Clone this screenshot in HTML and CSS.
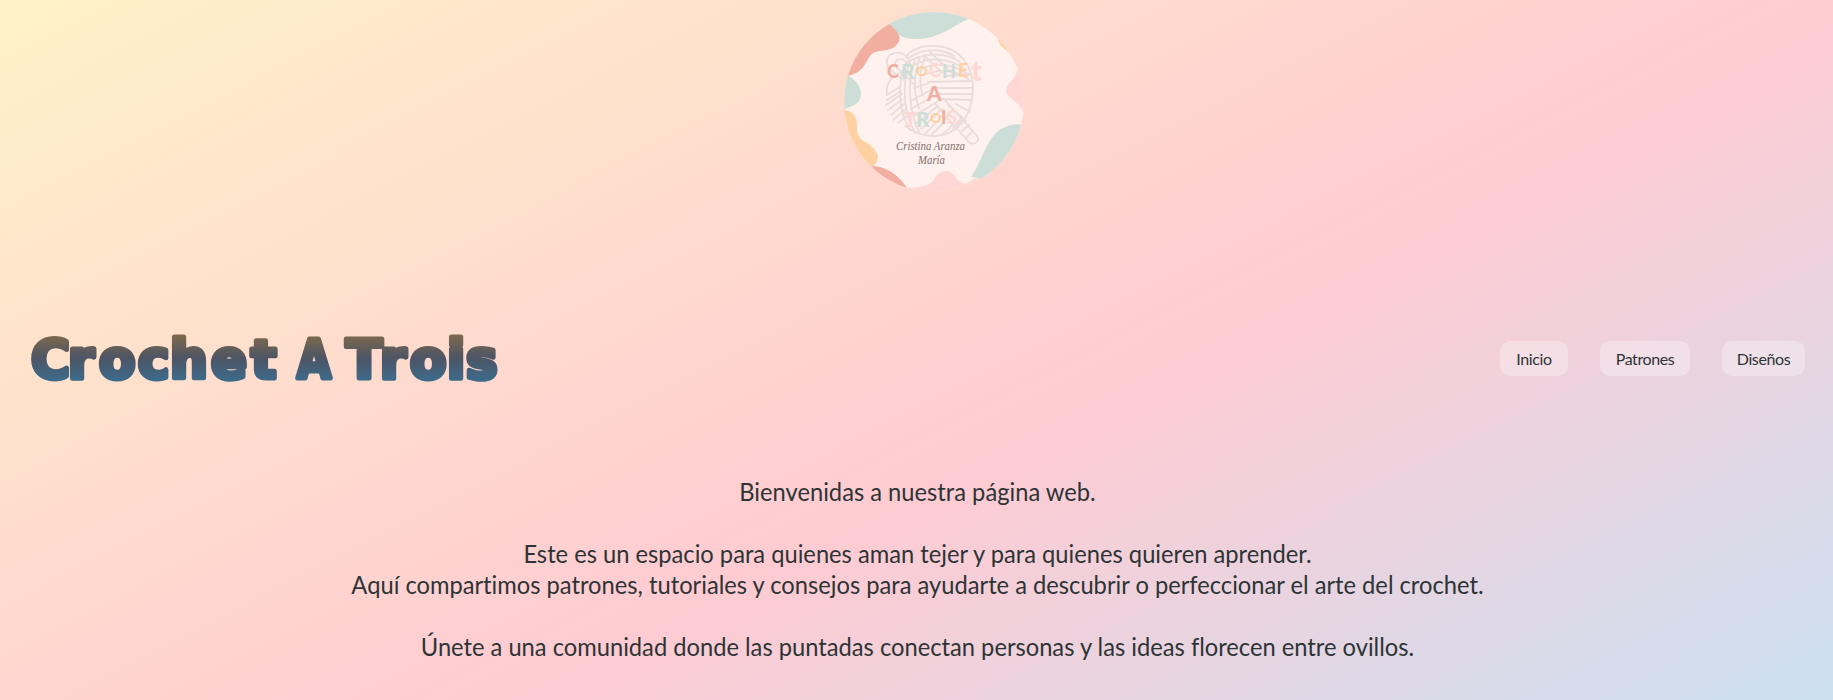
FILE: index.html
```html
<!DOCTYPE html>
<html lang="es">
<head>
<meta charset="utf-8">
<title>Crochet A Trois</title>
<link rel="stylesheet" href="styles.css">
</head>
<body>
<div class="brand">
<svg class="logo" viewBox="0 0 180 180" role="img">
<defs><clipPath id="disc"><circle cx="90" cy="90" r="90"/></clipPath></defs>
<g clip-path="url(#disc)">
<rect width="180" height="180" fill="#fff1ed"/>
<path d="M45 12C50 20 56 27 73 27C95 27 110 13 126 6L110-5H50Z" fill="#ccded7"/>
<path d="M45 12C54 19 58 25 54 31C49 40 38 37 29 41C21 47 23 60 3 64L-5 50L20 10Z" fill="#f2aea1"/>
<path d="M4 64C10 66 18 75 17 83C15 94 7 94-2 98V63Z" fill="#ccded7"/>
<path d="M-2 98C8 98 13 103 13 115C13 131 22 127 29 136C38 145 33 151 28 155L0 145Z" fill="#fed0a2"/>
<path d="M28 154C43 154 57 165 64 178L40 185Z" fill="#f2aea1"/>
<path d="M63 176C75 175 88 175 92 164C98 157 107 157 112 166C117 172 121 173 127 169C132 163 139 167 144 170L125 185H65Z" fill="#ffd8d5"/>
<path d="M127 165C138 150 142 127 157 117C166 112 176 111 182 114V160L142 175Q135 163 127 165Z" fill="#ccded7"/>
<path d="M173 57C173 67 163 69 162 78C163 89 175 87 179 101L190 90V50Z" fill="#ffd8d5"/>
<path d="M132 8C137 15 143 17 149 20L155 12ZM154 27C155 34 160 36 167 42L165 25Z" fill="#fed0a2"/>
<g fill="none" stroke="#e9dddb" stroke-width="1.8" stroke-linecap="round" stroke-linejoin="round">
<path d="M62 45C68 36 80 33 92 34C115 35 130 54 129 78C128 105 113 124 89 124C78 124 68 119 61 114"/>
<path d="M65 46C78 36 97 36 110 44M62 51C79 40 103 40 116 50M68 54C84 44 106 46 121 57M72 59C88 50 110 51 125 63M78 64C93 56 112 57 127 69M84 70L128 69M88 76L129 76M92 82L129 82M95 87L128 88M102 64L127 62"/>
<path d="M62 50C52 72 55 101 66 118M66 49C57 73 60 102 71 121M71 47C62 73 66 103 76 122M76 45C69 65 70 83 75 96M82 43C75 58 75 72 79 84M80 43L98 61M86 40L107 60"/>
<path d="M57 61C47 63 41 74 43 83L57 74M43 88L57 79M42 93L58 82M44 98L59 87M47 103L60 92M49 108L61 98M54 111L62 105M70 76L85 71M67 89L92 75M67 97L95 81M70 104L99 86M73 111L94 94M77 117L98 97M81 122L101 101M88 122C94 117 101 109 104 103M98 122Q107 117 110 109M109 116L116 107M104 93L122 109M112 92L126 100"/>
<path d="M63 54C64 48 56 45 52 49C47 55 58 59 63 65L71 74M59 68C50 60 41 56 43 49C44 40 55 39 61 43Q66 48 68 57"/>
<path d="M91 92L124 129C128 135 137 130 133 124L101 88M113 113L119 107M118 119L125 113M123 125L129 119"/>
</g>
<g class="art">
<text y="66"><tspan x="43" fill="#f2aea1">C</tspan><tspan x="57" y="67" class="big" fill="#ccded7">R</tspan><tspan x="72" y="64" class="small" fill="#fed0a2">O</tspan><tspan x="85" y="65" fill="#ffd8d5">C</tspan><tspan x="98" y="66" fill="#ccded7">H</tspan><tspan x="114" y="65" fill="#fed0a2">E</tspan><tspan x="127" y="69" class="tall" fill="#ffd8d5">t</tspan></text>
<text x="83" y="89" class="big" fill="#f2aea1">A</text>
<text y="115"><tspan x="60" y="115" class="big" fill="#ffd8d5">T</tspan><tspan x="72" y="115" class="big" fill="#ccded7">R</tspan><tspan x="86" y="111" class="small" fill="#fed0a2">O</tspan><tspan x="97" y="112" fill="#f2aea1">I</tspan><tspan x="103" y="112" fill="#ffd8d5">S</tspan></text>
</g>
<g class="script"><text x="52" y="138" textLength="69" lengthAdjust="spacingAndGlyphs">Cristina Aranza</text><text x="74" y="152" textLength="27" lengthAdjust="spacingAndGlyphs">María</text></g>
</g>
</svg>
</div>
<header class="header">
<h1 class="title"><svg class="wordmark" viewBox="0 0 490 75">
<defs><linearGradient id="ink" gradientUnits="userSpaceOnUse" x1="0" y1="14" x2="0" y2="62"><stop offset="0" stop-color="#806a4c"/><stop offset=".5" stop-color="#4d5565"/><stop offset="1" stop-color="#3c6c8d"/></linearGradient></defs>
<text y="57.5" x="11 48 79 118 150 191 231">Crochet</text>
<text y="57.5" x="277" textLength="34" lengthAdjust="spacingAndGlyphs">A</text>
<text y="57.5" x="326 360 390 427 446">Trois</text>
</svg></h1>
<nav class="nav"><a class="link inicio">Inicio</a><a class="link patrones">Patrones</a><a class="link disenos">Diseños</a></nav>
</header>
<main class="welcome">
<p>Bienvenidas a nuestra página web.</p>
<p>Este es un espacio para quienes aman tejer y para quienes quieren aprender.<br>Aquí compartimos patrones, tutoriales y consejos para ayudarte a descubrir o perfeccionar el arte del crochet.</p>
<p>Únete a una comunidad donde las puntadas conectan personas y las ideas florecen entre ovillos.</p>
</main>
</body>
</html>
```
FILE: styles.css
```css
*{box-sizing:border-box}
html{height:100%}
body{margin:0;height:700px;overflow:hidden;font-family:Lato,sans-serif;color:#2d3436;background:linear-gradient(152.7deg,#fff2c8 0%,#ffcbd2 58.7%,#cbe0f2 100%)}
.brand{display:flex;justify-content:center;padding:12px 0 0 34px;height:320px}
.logo{width:180px;height:180px}
.art{font-family:Lato,sans-serif;font-weight:900;font-size:18px}
.art .big{font-size:21px}
.art .small{font-size:14px}
.art .tall{font-size:29px}
.script{font-family:"Liberation Serif",serif;font-style:italic;font-size:12px;fill:#80706e}
.header{display:flex;justify-content:space-between;align-items:center;height:75px;padding:0 28px 0 20px}
.title{margin:0;height:75px}
.wordmark{display:block;width:490px;height:75px;overflow:visible}
.wordmark text{font-family:"DejaVu Sans",sans-serif;font-weight:700;font-size:53px;fill:url(#ink);stroke:url(#ink);stroke-width:5px;stroke-linejoin:round}
.nav{display:flex;gap:32px;padding-top:2px}
.link{display:flex;align-items:center;justify-content:center;height:35px;border-radius:10px;background:rgba(255,255,255,.3);font-size:16px;letter-spacing:-.4px}
.inicio{width:68px}
.patrones{width:90px}
.disenos{width:83px}
.welcome{padding-top:81px;text-align:center;font-size:25px;line-height:31px;font-variant-ligatures:none;transform:scaleX(.948)}
.welcome p{margin:0 0 31px 2px;white-space:nowrap}
```
